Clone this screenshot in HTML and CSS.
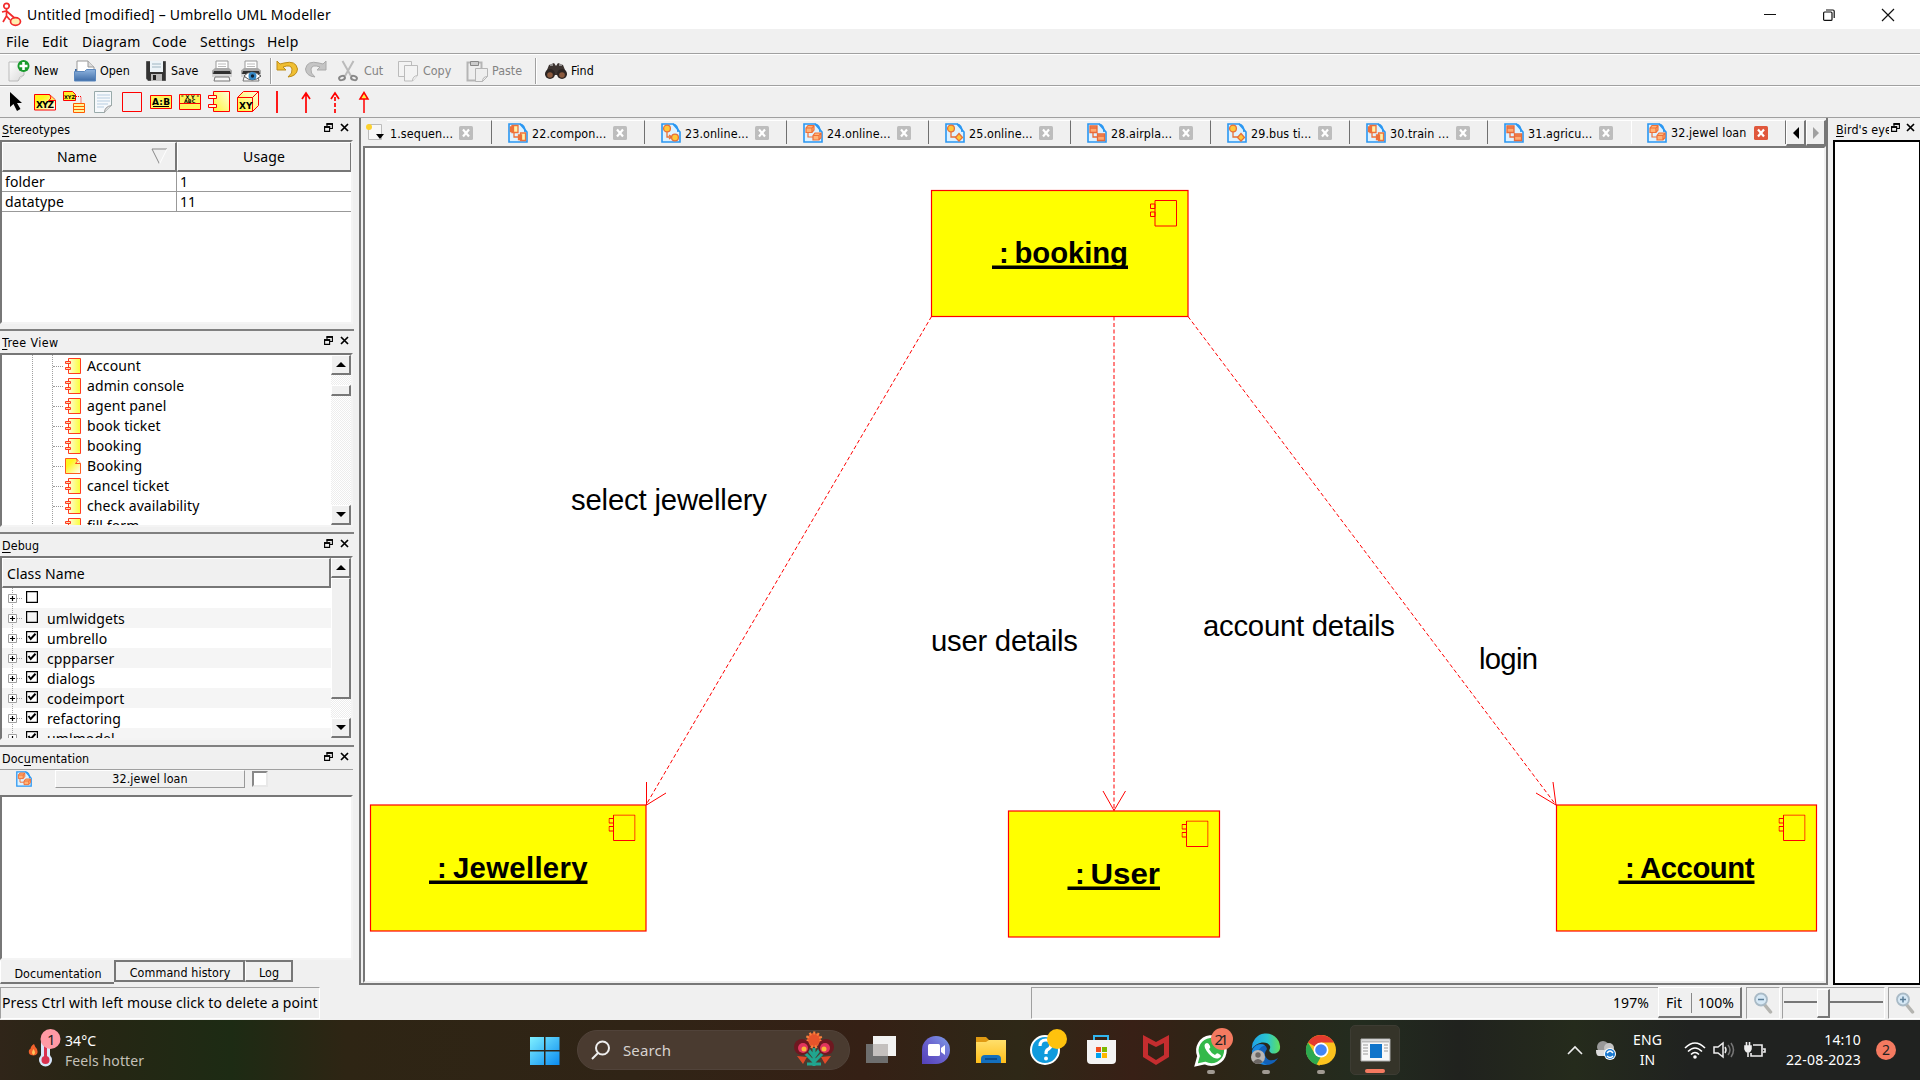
FILE: index.html
```html
<!DOCTYPE html>
<html lang="en">
<head>
<meta charset="utf-8">
<title>Untitled [modified] – Umbrello UML Modeller</title>
<link rel="stylesheet" href="styles.css">
</head>
<body>
<svg class="defs" width="0" height="0">
  <defs>
    <linearGradient id="gy" x1="1" y1="0" x2="0" y2="1"><stop offset="0" stop-color="#fffde0"/><stop offset="1" stop-color="#fff533"/></linearGradient>
    <linearGradient id="gc" x1="0" y1="0" x2="1" y2="0"><stop offset="0" stop-color="#fffbe0"/><stop offset="1" stop-color="#fbff35"/></linearGradient>
    <linearGradient id="gn" x1="0" y1="0" x2="1" y2="1"><stop offset=".3" stop-color="#fff51e"/><stop offset="1" stop-color="#ffffff"/></linearGradient>
    <linearGradient id="gp" x1="0" y1="0" x2="1" y2="1"><stop offset="0" stop-color="#ffffff"/><stop offset="1" stop-color="#d9d9d9"/></linearGradient>
    <linearGradient id="gb" x1="0" y1="0" x2="0" y2="1"><stop offset="0" stop-color="#8fb4df"/><stop offset="1" stop-color="#3f6da8"/></linearGradient>
    <linearGradient id="gw" x1="0" y1="0" x2="1" y2="1"><stop offset="0" stop-color="#7ff0ff"/><stop offset="1" stop-color="#0a8bf0"/></linearGradient>
    <linearGradient id="gf" x1="0" y1="0" x2="0" y2="1"><stop offset="0" stop-color="#ffdf6b"/><stop offset="1" stop-color="#ffbe1a"/></linearGradient>
    <linearGradient id="gch" x1="1" y1="0" x2="0" y2="1"><stop offset="0" stop-color="#7fa0e8"/><stop offset=".5" stop-color="#6a63cf"/><stop offset="1" stop-color="#5340b8"/></linearGradient>
    <linearGradient id="ge" x1="0" y1="0" x2="1" y2="0"><stop offset="0" stop-color="#1fa3e8"/><stop offset=".55" stop-color="#2bc5cf"/><stop offset="1" stop-color="#62e05a"/></linearGradient>
    <symbol id="float" viewBox="0 0 9 9"><path d="M3 3V.8h5.400v4.700H6" fill="none" stroke="#000" stroke-width="1.1"/><path d="M2.500 1h6.400" stroke="#000" stroke-width="1.8"/><path d="M.6 4v4.400h5V4z" fill="#f0f0f0" stroke="#000" stroke-width="1.1"/><path d="M0 4h6.200" stroke="#000" stroke-width="1.8"/></symbol>
    <symbol id="x" viewBox="0 0 9 9"><path d="M1 1l7 7M8 1L1 8" stroke="#000" stroke-width="1.7"/></symbol>
    <symbol id="comp" viewBox="0 0 16 16"><path d="M3.500.5h12v15h-12z" fill="url(#gc)" stroke="#ff3b1f"/><path d="M.5 3.500h5v2h-5zM.5 9.500h5v2h-5z" fill="#ffd9b0" stroke="#ff3b1f"/></symbol>
    <symbol id="art" viewBox="0 0 16 16"><path d="M.5.500h11l4 5v10H.5z" fill="url(#gn)" stroke="#ff5a1f"/><path d="M11.500.5q2 3-1 5h5" fill="#fff5b0" stroke="#ff4b1f"/></symbol>
    <symbol id="page" viewBox="0 0 20 20"><path d="M1 1h11l7 8v10H1z" fill="#def2ff" stroke="#2a97f2" stroke-width="1.6"/><path d="M12 1q5 1 5 8" fill="none" stroke="#2a97f2" stroke-width="1.6"/></symbol>
    <symbol id="pa" viewBox="0 0 20 20"><use href="#page"/><g fill="#fff0a8" stroke="#ef7038" stroke-width="1.300"><path d="M6 10v4h5" fill="none"/><path d="M4 2.500h6v7H4zM12.500 10h5v7.500h-5zM2.500 4h3v1.500h-3zM2.500 7h3v1.500h-3zM10.500 12h3v1.500h-3zM10.500 15h3v1.500h-3z"/></g></symbol>
    <symbol id="pb" viewBox="0 0 20 20"><use href="#page"/><g fill="#ffc83a" stroke="#e87038" stroke-width="1.300"><path d="M6 9v5h4M8 12l3 2-3 2" fill="none"/><circle cx="6" cy="5.500" r="3.400"/><circle cx="14" cy="14.500" r="3.400"/></g></symbol>
    <symbol id="pc" viewBox="0 0 20 20"><use href="#page"/><g fill="#ffb477" stroke="#ef7038" stroke-width="1.200"><path d="M5 10v4h5" fill="none"/><path d="M3 5l2-2.500h6V7L9 9.500H3zM3 5h6v4.500M9 5l2-2.500M10 12.500l2-2.500h6v4.500l-2 2.500h-6zM10 12.500h6v4.500M16 12.500l2-2.500"/></g></symbol>
    <symbol id="pd" viewBox="0 0 20 20"><use href="#page"/><g fill="#ffc83a" stroke="#e87038" stroke-width="1.300"><path d="M6 9v5h5" fill="none"/><circle cx="6" cy="5.500" r="3.400"/><path d="M14 10.500l3.500 4-3.500 3.500-3.500-3.500z"/></g></symbol>
    <symbol id="pe" viewBox="0 0 20 20"><use href="#page"/><g fill="#ffaa70" stroke="#e86a38" stroke-width="1.300"><path d="M6 10v4h4" fill="none"/><path d="M3 3h7v6.500H3zM10.500 11h7v6.500h-7zM3 5h7M10.500 13h7"/></g></symbol>
    <symbol id="closetab" viewBox="0 0 14 14"><rect width="14" height="14" rx="1.500" fill="currentColor"/><path d="M4 3.500l6 7M10 3.500l-6 7" stroke="#fff" stroke-width="2.200"/></symbol>
    <symbol id="printer" viewBox="0 0 22 22"><path d="M5 1h12v10H5z" fill="#fff" stroke="#999"/><path d="M7 4h8M7 6.500h8" stroke="#bbb"/><path d="M1 10.500l3-2.500h14l3 2.500v6H1z" fill="#a9a9a9"/><path d="M3 11h16l1 3H2z" fill="#303030"/><path d="M1 14h20v3H1z" fill="#d5d5d5"/><path d="M4 17h14l1 4H3z" fill="#f6f6f6" stroke="#777"/></symbol>
    <symbol id="mag" viewBox="0 0 20 22"><path d="M11 12l6.500 8" stroke="#b4b4b0" stroke-width="3.500" stroke-linecap="round"/><circle cx="8" cy="7.500" r="6" fill="#d6e8f5" stroke="#a9bac6" stroke-width="1.800"/></symbol>
    <symbol id="tick" viewBox="0 0 12 12"><path d="M.6.6h10.800v10.800H.6z" fill="#fff" stroke="#000" stroke-width="1.200"/><path d="M2.500 5l2.200 3L9.500 2.800" fill="none" stroke="#000" stroke-width="2"/></symbol>
    <symbol id="untick" viewBox="0 0 12 12"><path d="M.6.6h10.800v10.800H.6z" fill="none" stroke="#000" stroke-width="1.200"/></symbol>
    <symbol id="plus" viewBox="0 0 14 20"><path d="M4.500 0v20M9 10.500h5" stroke="#a0a0a0" stroke-dasharray="1 1"/><path d="M.5 6.500h8v8h-8z" fill="#fff" stroke="#a0a0a0"/><path d="M2 10.500h5M4.500 8v5" stroke="#000" stroke-width="1.200"/></symbol>
    <symbol id="classicon" viewBox="0 0 27 27"><path d="M5 .5h21.500v25.500H5zM.5 4h4.500v4.500H.5zM.5 12h4.500v4.500H.5z" fill="#ff0" stroke="#f00"/></symbol>
  </defs>
</svg>

<header class="titlebar">
  <svg class="app-icon" width="20" height="25" viewBox="0 0 20 25"><g fill="none" stroke="#f22b2b" stroke-width="1.700"><circle cx="5.500" cy="4" r="2.700"/><path d="M5.500 7v7L2 20M5.500 14l3.500 4M1 10l4.500-1 8 7"/><ellipse cx="14.500" cy="19.500" rx="5" ry="3.800" fill="#ffefb0"/></g></svg>
  <span class="title">Untitled [modified] – Umbrello UML Modeller</span>
  <div class="win-buttons">
    <svg width="12" height="12"><path d="M0 5.500h12" stroke="#111"/></svg>
    <svg width="12" height="12" fill="none" stroke="#111" stroke-width="1.200"><rect x=".6" y="3" width="8.400" height="8.400" rx="1"/><path d="M3 1h7q1.200 0 1.200 1.200V9"/></svg>
    <svg width="12" height="12" stroke="#111" stroke-width="1.200"><path d="M0 0l12 12M12 0L0 12"/></svg>
  </div>
</header>

<nav class="menubar"><span class="m-file">File</span><span class="m-edit">Edit</span><span class="m-diagram">Diagram</span><span class="m-code">Code</span><span class="m-settings">Settings</span><span class="m-help">Help</span></nav>

<div class="toolbar main-tools">
  <button class="t-new"><svg width="22" height="22"><path d="M1 2h15v13l-6 6H1z" fill="url(#gp)" stroke="#bbb"/><path d="M10 21q1-5 6-6" fill="#fff" stroke="#bbb"/><circle cx="15.500" cy="6" r="6" fill="#189a2c"/><path d="M11.500 6h8M15.500 2v8" stroke="#fff" stroke-width="2.600"/></svg>New</button>
  <button class="t-open"><svg width="22" height="22"><path d="M1 9h20v12H1z" fill="#3466a5"/><path d="M3 1h11l6 6v8H3z" fill="#fff" stroke="#999"/><path d="M14 1v6h6" fill="#ddd" stroke="#999"/><path d="M.5 11.500h10l2-2h9v11.500H.5z" fill="url(#gb)" stroke="#5b87bd"/></svg>Open</button>
  <button class="t-save"><svg width="20" height="22"><path d="M.5 1.500h19v19H2l-1.500-2z" fill="#333" stroke="#555"/><path d="M4 1h13v11H4z" fill="#edf4f8"/><path d="M6 4h9M6 7h9" stroke="#9db4c0"/><path d="M5 14h11v7H5z" fill="#bbb"/><path d="M7 15h3v5H7z" fill="#222"/></svg>Save</button>
  <button class="t-print"><svg width="22" height="22"><use href="#printer"/></svg></button>
  <button class="t-preview"><svg width="22" height="22"><use href="#printer"/><path d="M4 16q7-8 17 0-9 8-17 0z" fill="#fff" stroke="#555"/><circle cx="12.500" cy="16" r="4" fill="#3388c6"/><circle cx="12.500" cy="16" r="1.700" fill="#123"/></svg></button>
  <i class="sep"></i>
  <button class="t-undo"><svg width="22" height="18" viewBox="0 0 22 18"><path d="M1 1v9h9L7 7q8-3 9 2 1 4-4 8 9-1 9.500-8Q20 0 8 3L4 4z" fill="#f0bf32" stroke="#bd8c18"/></svg></button>
  <button class="t-redo"><svg width="22" height="18" viewBox="0 0 22 18"><path d="M21 1v9h-9l3-3Q7 4 6 9q-1 4 4 8Q1 16 .5 9 2 0 14 3l4 1z" fill="#c5c5c5" stroke="#aaa"/></svg></button>
  <button class="t-cut off"><svg width="20" height="22" fill="none" stroke-width="2"><path d="M4.500 1l8.500 15M15.500 1L7 16" stroke="#bbb"/><ellipse cx="4" cy="18" rx="3" ry="2" stroke="#888" transform="rotate(-20 4 18)"/><ellipse cx="16" cy="18" rx="3" ry="2" stroke="#888" transform="rotate(20 16 18)"/></svg>Cut</button>
  <button class="t-copy off"><svg width="20" height="22" fill="#f3f3f3" stroke="#bbb"><path d="M.5 1.500h13v15H.5z"/><path d="M6.500 5.500h13v10l-5 5.500h-8z"/><path d="M14.500 21q0-5 5-5.500"/></svg>Copy</button>
  <button class="t-paste off"><svg width="22" height="22" fill="#eee" stroke="#b5b5b5"><path d="M1.500 2.500h14v18h-14z" stroke-width="2"/><path d="M4.500 1.500h8v4h-8z" fill="#ccc" stroke="#888"/><path d="M9.500 8.500h12v8l-5 5h-7zM16.500 21.500q0-5 5-5"/></svg>Paste</button>
  <i class="sep sep2"></i>
  <button class="t-find"><svg width="22" height="18"><path d="M4 3l5-2 2 3 2-3 5 2 4 10H0z" fill="#3c3330"/><path d="M5 3l3 0M14 3l3 0" stroke="#aaa" stroke-width="1.500"/><circle cx="5" cy="12" r="5" fill="#2d2523"/><circle cx="17" cy="12" r="5" fill="#2d2523"/><circle cx="5" cy="13" r="2.800" fill="#8b5a3e"/><circle cx="17" cy="13" r="2.800" fill="#8b5a3e"/></svg>Find</button>
</div>

<div class="toolbar draw-tools">
  <button><svg width="14" height="20" viewBox="0 0 14 20"><path d="M1 0v15l3.500-3 3.500 7 3.500-2-3.500-6H13z"/></svg></button>
  <button><svg width="22" height="18"><path d="M.5 1.500h15l6 5.500v10H.5z" fill="url(#gn)" stroke="red"/><path d="M15.500 1.500q3 4-1 6h7" fill="#ffe96a" stroke="red"/><text x="2" y="14.500" class="ic10" textLength="18">XYZ</text></svg></button>
  <button><svg width="22" height="22"><path d="M.5.500h9l3 3v6H.5z" fill="#fff02a" stroke="red"/><text x="1" y="8" class="ic6">XYZ</text><path d="M13 5.500h5v6" stroke="red" fill="none" stroke-dasharray="1 1"/><path d="M10.500 12.500h11v9h-11zM10.500 15.500h11M10.500 18.500h11" fill="#fff59a" stroke="#ff5a00"/></svg></button>
  <button><svg width="20" height="22"><path d="M1.500.500h17v14l-7 7h-10z" fill="#f6f9fc" stroke="#9aa"/><path d="M4 4h13M4 7h13M4 10h13M4 13h11M4 16h7" stroke="#b7cde0"/><path d="M11.500 21.500q0-6 7-7" fill="#ddd" stroke="#999"/></svg></button>
  <button><svg width="20" height="20"><path d="M.5.500h19v19H.5z" fill="none" stroke="red"/></svg></button>
  <button><svg width="22" height="14"><path d="M.5.500h21v13H.5z" fill="#fff45a" stroke="red"/><text x="2" y="10" class="ic9" textLength="18">A:B</text><path d="M3 11.500h16" stroke="#000"/></svg></button>
  <button><svg width="22" height="16"><path d="M.5.500h21v15H.5zM.5 9.500h21" fill="#fff45a" stroke="red"/><text x="2" y="5" class="ic6" textLength="18">"XY"</text><text x="5" y="8.500" class="ic6">ABC</text></svg></button>
  <button><svg width="22" height="22"><path d="M5.500.500h16v20h-16z" fill="url(#gy)" stroke="red"/><path d="M.5 4.500h8v3h-8zM.5 13.500h8v3h-8z" fill="#ffffd0" stroke="red"/></svg></button>
  <button><svg width="22" height="22"><path d="M.5 6.500l6-6h15v14l-6 6H.5zM.5 6.500h15v14M15.500 6.500l6-6" fill="url(#gy)" stroke="red"/><text x="2" y="18" class="ic9">XY</text></svg></button>
  <button><svg width="12" height="22"><path d="M6 0v22" stroke="red" stroke-width="1.800"/></svg></button>
  <button><svg width="12" height="22" fill="none" stroke="red" stroke-width="1.700"><path d="M6 22V2M2 8l4-6 4 6"/></svg></button>
  <button><svg width="12" height="22" fill="none" stroke="red" stroke-width="1.700"><path d="M6 22V2" stroke-dasharray="4 2"/><path d="M2 8l4-6 4 6"/></svg></button>
  <button><svg width="12" height="22" fill="#fff14a" stroke="red" stroke-width="1.500"><path d="M6 22V8M2 8l4-6.500L10 8z"/></svg></button>
</div>

<main class="workspace">
  <aside class="docks">
    <section class="dock d-stereo">
      <h2><span><u>S</u>tereotypes</span><svg width="9" height="9"><use href="#float"/></svg><svg width="9" height="9"><use href="#x"/></svg></h2>
      <div class="sunken">
        <div class="grid head"><b class="raised">Name<svg width="17" height="17"><path d="M1 1h15M1 1l7.500 15" stroke="#888" fill="none"/><path d="M16 1L8.500 16" stroke="#fff"/></svg></b><b class="raised">Usage</b></div>
        <div class="grid"><span>folder</span><span>1</span></div>
        <div class="grid"><span>datatype</span><span>11</span></div>
      </div>
    </section>
    <section class="dock d-tree">
      <h2><span class="tv"><u>T</u>ree View</span><svg width="9" height="9"><use href="#float"/></svg><svg width="9" height="9"><use href="#x"/></svg></h2>
      <div class="sunken split">
        <ul class="tree">
          <li><svg width="16" height="16"><use href="#comp"/></svg>Account</li>
          <li><svg width="16" height="16"><use href="#comp"/></svg>admin console</li>
          <li><svg width="16" height="16"><use href="#comp"/></svg>agent panel</li>
          <li><svg width="16" height="16"><use href="#comp"/></svg>book ticket</li>
          <li><svg width="16" height="16"><use href="#comp"/></svg>booking</li>
          <li><svg width="16" height="16"><use href="#art"/></svg>Booking</li>
          <li><svg width="16" height="16"><use href="#comp"/></svg>cancel ticket</li>
          <li><svg width="16" height="16"><use href="#comp"/></svg>check availability</li>
          <li><svg width="16" height="16"><use href="#comp"/></svg>fill form</li>
        </ul>
        <div class="scroll"><i class="raised arrow up"></i><i class="gap"></i><i class="raised thumb"></i><i class="fill"></i><i class="raised arrow down"></i></div>
      </div>
    </section>
    <section class="dock d-debug">
      <h2><span><u>D</u>ebug</span><svg width="9" height="9"><use href="#float"/></svg><svg width="9" height="9"><use href="#x"/></svg></h2>
      <div class="sunken split">
        <div class="debug">
          <div class="raised class-name">Class Name</div>
          <ul>
            <li><svg width="14" height="20"><use href="#plus"/></svg><svg width="12" height="12"><use href="#untick"/></svg></li>
            <li><svg width="14" height="20"><use href="#plus"/></svg><svg width="12" height="12"><use href="#untick"/></svg>umlwidgets</li>
            <li><svg width="14" height="20"><use href="#plus"/></svg><svg width="12" height="12"><use href="#tick"/></svg>umbrello</li>
            <li><svg width="14" height="20"><use href="#plus"/></svg><svg width="12" height="12"><use href="#tick"/></svg>cppparser</li>
            <li><svg width="14" height="20"><use href="#plus"/></svg><svg width="12" height="12"><use href="#tick"/></svg>dialogs</li>
            <li><svg width="14" height="20"><use href="#plus"/></svg><svg width="12" height="12"><use href="#tick"/></svg>codeimport</li>
            <li><svg width="14" height="20"><use href="#plus"/></svg><svg width="12" height="12"><use href="#tick"/></svg>refactoring</li>
            <li><svg width="14" height="20"><use href="#plus"/></svg><svg width="12" height="12"><use href="#tick"/></svg>umlmodel</li>
          </ul>
        </div>
        <div class="scroll"><i class="raised arrow up"></i><i class="raised thumb"></i><i class="fill"></i><i class="raised arrow down"></i></div>
      </div>
    </section>
    <section class="dock d-doc">
      <h2><span>Doc<u>u</u>mentation</span><svg width="9" height="9"><use href="#float"/></svg><svg width="9" height="9"><use href="#x"/></svg></h2>
      <div class="doc-row"><svg width="16" height="16"><use href="#pc"/></svg><span class="doc-name">32.jewel loan</span><i class="doc-check"></i></div>
      <div class="sunken"></div>
      <div class="dock-tabs"><span class="on">Documentation</span><span class="hist">Command history</span><span class="log">Log</span></div>
    </section>
  </aside>

  <section class="editor">
    <div class="tabs">
      <svg class="newtab" width="20" height="20"><path d="M3.500 2.500h13v15h-13z" fill="#f7f7f7" stroke="#bbb"/><circle cx="4" cy="5" r="3" fill="#fcd12e"/><path d="M11 12h8l-4 5z"/></svg>
      <div class="tab t1"><span>1.sequen...</span><svg width="14" height="14"><use href="#closetab"/></svg></div>
      <div class="tab t2"><svg width="20" height="20"><use href="#pa"/></svg><span>22.compon...</span><svg width="14" height="14"><use href="#closetab"/></svg></div>
      <div class="tab t3"><svg width="20" height="20"><use href="#pb"/></svg><span>23.online...</span><svg width="14" height="14"><use href="#closetab"/></svg></div>
      <div class="tab t4"><svg width="20" height="20"><use href="#pc"/></svg><span>24.online...</span><svg width="14" height="14"><use href="#closetab"/></svg></div>
      <div class="tab t5"><svg width="20" height="20"><use href="#pd"/></svg><span>25.online...</span><svg width="14" height="14"><use href="#closetab"/></svg></div>
      <div class="tab t6"><svg width="20" height="20"><use href="#pe"/></svg><span>28.airpla...</span><svg width="14" height="14"><use href="#closetab"/></svg></div>
      <div class="tab t7"><svg width="20" height="20"><use href="#pd"/></svg><span>29.bus ti...</span><svg width="14" height="14"><use href="#closetab"/></svg></div>
      <div class="tab t8"><svg width="20" height="20"><use href="#pa"/></svg><span>30.train ...</span><svg width="14" height="14"><use href="#closetab"/></svg></div>
      <div class="tab t9"><svg width="20" height="20"><use href="#pe"/></svg><span>31.agricu...</span><svg width="14" height="14"><use href="#closetab"/></svg></div>
      <div class="tab t10"><svg width="20" height="20"><use href="#pc"/></svg><span>32.jewel loan</span><svg width="14" height="14"><use href="#closetab"/></svg></div>
      <i class="raised nav"><svg width="8" height="12"><path d="M7 0v12L1 6z"/></svg></i><i class="raised nav"><svg width="8" height="12"><path d="M1 0v12l6-6z" fill="#a0a0a0"/></svg></i>
    </div>
    <div class="canvas">
      <svg width="1460" height="835" viewBox="365 148 1460 835">
        <g fill="#ff0" stroke="#f00" stroke-width="1.200">
          <rect x="931.500" y="190.500" width="256.500" height="126"/>
          <rect x="370.500" y="805" width="275.500" height="126"/>
          <rect x="1008.500" y="811" width="211" height="126"/>
          <rect x="1556.500" y="805" width="260" height="126"/>
        </g>
        <g stroke="#f00" fill="none">
          <path d="M931.500 316.500L646 805M1114 316.500V811M1188 316.500L1556 805" stroke-dasharray="4 2.500"/>
          <path d="M646.500 782V805L666 793M1103 791l11 19.500L1125.500 791M1536 793l20 12-3-23"/>
        </g>
        <use href="#classicon" x="1150" y="200" width="27" height="27"/>
        <use href="#classicon" x="608.500" y="814.500" width="27" height="27"/>
        <use href="#classicon" x="1181.500" y="820.500" width="27" height="27"/>
        <use href="#classicon" x="1778.500" y="814.500" width="27" height="27"/>
        <g class="obj">
          <text x="999" y="262.500">:</text><text x="1014.500" y="262.500" textLength="113.500">booking</text>
          <text x="437" y="877.500">:</text><text x="453" y="877.500" textLength="134.500">Jewellery</text>
          <text x="1075" y="883.500">:</text><text x="1090.500" y="883.500" textLength="69.500" lengthAdjust="spacingAndGlyphs">User</text>
          <text x="1625" y="877.500">:</text><text x="1640" y="877.500" textLength="114.500">Account</text>
        </g>
        <path d="M992 267.300h136M429 882.300h158.500M1067.500 888.300h92.500M1618.500 882.300h136" stroke="#000" stroke-width="3.600"/>
        <g class="lbl">
          <text x="571" y="509.500" textLength="196">select jewellery</text>
          <text x="931" y="650.500" textLength="147">user details</text>
          <text x="1203" y="635.500" textLength="192">account details</text>
          <text x="1479" y="668.500" textLength="59">login</text>
        </g>
      </svg>
    </div>
  </section>

  <section class="bird">
    <h2><span><u>B</u>ird's eye</span><svg width="9" height="9"><use href="#float"/></svg><svg width="9" height="9"><use href="#x"/></svg></h2>
    <div class="bird-view"></div>
  </section>
</main>

<footer class="status">
  <div class="cell msg">Press Ctrl with left mouse click to delete a point</div>
  <div class="cell wide">197%</div>
  <div class="raised fit"><span>Fit</span><span>100%</span></div>
  <div class="cell z1"><svg width="20" height="22"><use href="#mag"/><path d="M5 7.500h6" stroke="#5b7e98" stroke-width="1.500"/></svg></div>
  <div class="cell slider"><i class="groove"></i><i class="raised knob"></i><i class="groove rest"></i></div>
  <div class="cell z2"><svg width="20" height="22"><use href="#mag"/><path d="M5 7.500h6M8 4.500v6" stroke="#5b7e98" stroke-width="1.500"/></svg></div>
</footer>

<div class="taskbar">
  <svg class="weather" width="34" height="40"><path d="M6 14q1 3 3 5 2 6-3.500 6.500Q-.5 25 1 20q2-1 2-3 1-2 3-3z" fill="#f2622c"/><path d="M5.500 19q3 4 0 6-3-2 0-6z" fill="#ffc65c"/><rect x="13" y="5" width="9" height="25" rx="4.500" fill="#d7e7fb"/><circle cx="17.500" cy="30" r="6.500" fill="#d7e7fb"/><path d="M17.500 12v18" stroke="#d9304f" stroke-width="3"/><circle cx="17.500" cy="30" r="4" fill="#d9304f"/><circle cx="22.500" cy="9" r="10" fill="#ff9aa5"/><text x="19" y="14.500" class="badge">1</text></svg>
  <div class="wtext"><span>34°C</span><span class="dim">Feels hotter</span></div>
  <svg class="start" width="30" height="30"><path d="M0 1h14v13H0zM15.500 1h14v13h-14zM0 15.500h14V29H0zM15.500 15.500h14V29h-14z" fill="url(#gw)"/></svg>
  <div class="search"><svg width="20" height="20" fill="none" stroke="#eee" stroke-width="2"><circle cx="11.500" cy="8" r="6.500"/><path d="M7 13l-6 6"/></svg><span>Search</span>
    <svg width="40" height="36"><path d="M20 34V16M20 30l-9-9M20 30l9-9M20 25l-6-8M20 25l6-8M13 32h14" stroke="#20a58f" stroke-width="3"/><circle cx="20" cy="8" r="7" fill="#e8542b"/><circle cx="20" cy="8" r="7" fill="none" stroke="#f5813c" stroke-width="3" stroke-dasharray="2 2"/><circle cx="8" cy="15" r="8" fill="#6e1820"/><circle cx="9" cy="16" r="5" fill="#e0355d"/><circle cx="10" cy="17" r="2.500" fill="#f8b83a"/><circle cx="32" cy="15" r="8" fill="#6e1820"/><circle cx="31" cy="16" r="5" fill="#e0355d"/><circle cx="30" cy="17" r="2.500" fill="#f8b83a"/><path d="M3 24l10 1-4 7zM37 24l-10 1 4 7z" fill="#e04a28"/></svg>
  </div>
  <div class="apps">
    <span><svg width="36" height="36"><rect x="3" y="12" width="22" height="19" fill="#6e6e6e"/><rect x="10" y="4" width="23" height="20" fill="#f2f2f2"/><path d="M10 12h15v12H10z" fill="#c4c0be"/></svg></span>
    <span><svg width="36" height="36"><path d="M4 31V18A14 14 0 1 1 18 32H4z" fill="url(#gch)"/><rect x="10" y="12" width="12" height="12" rx="1.500" fill="#fff"/><path d="M23 16l4-3v10l-4-3z" fill="#fff"/></svg></span>
    <span><svg width="36" height="36"><path d="M3 5h10l3 3v6H3z" fill="#e09a13"/><path d="M3 10h10l3-2h17v23H3z" fill="url(#gf)"/><path d="M8 31v-4q0-4 4-4h12q4 0 4 4v4z" fill="#146fbd"/><path d="M12 27h12" stroke="#0b4c8e" stroke-width="2"/></svg></span>
    <span><svg width="42" height="42"><circle cx="20" cy="21" r="14" fill="#109bdd" stroke="#fff" stroke-width="2"/><path d="M15 17q0-6 6-6 5 0 5 5 0 3-4 5-1 1-1 4" fill="none" stroke="#fff" stroke-width="3.200"/><circle cx="21" cy="29.500" r="2" fill="#fff"/><circle cx="32" cy="10" r="10" fill="#ffc20d"/></svg></span>
    <span><svg width="36" height="36"><path d="M11 9V4h14v5" fill="none" stroke="#31b5ee" stroke-width="2"/><path d="M4 8h29v20q0 4-4 4H8q-4 0-4-4z" fill="#f4f4f4"/><path d="M13 15h5v5h-5z" fill="#f04e1f"/><path d="M19 15h5v5h-5z" fill="#7db900"/><path d="M13 21h5v5h-5z" fill="#00a3ee"/><path d="M19 21h5v5h-5z" fill="#ffb800"/></svg></span>
    <span><svg width="36" height="36"><path d="M5 3l13 7 13-7v22l-13 8-13-8zM10 11v12l8 5 8-5V11l-8 4z" fill="#c52d2f" fill-rule="evenodd"/></svg></span>
    <span class="run"><svg width="42" height="42"><path d="M6 36l2.500-9A14 14 0 1 1 15 34z" fill="#34b94a" stroke="#fff" stroke-width="2.600"/><path d="M15 15q3-3 5 2 1 2-1 3 2 4 6 6 2-3 4-1 4 2 0 4-4 2-10-4-6-7-4-10z" fill="#fff"/><circle cx="32" cy="10" r="11" fill="#f47a60"/><text x="24.500" y="15.500" class="badge" textLength="14">21</text></svg></span>
    <span class="run"><svg width="36" height="36"><path d="M4 17A14 14 0 0 1 32 14c1 8-8 9-10 6-2-2 1-3 0-6-3-6-14-4-18 3z" fill="url(#ge)"/><path d="M4 19q1-6 8-7 6 0 7 5-5 7 2 11 5 1 9-2-5 8-14 7Q4 31 4 19z" fill="#1261b8"/><path d="M4 19q4-9 13-6-9 3-6 12 2 5 8 8Q5 32 4 19z" fill="#1689df"/><circle cx="10" cy="25" r="7" fill="#b8b5b2"/><circle cx="10" cy="23" r="2.700" fill="#6b6663"/><path d="M5 30q5-6 10 0-5 4-10 0z" fill="#6b6663"/></svg></span>
    <span class="run"><svg width="36" height="36"><circle cx="18" cy="18" r="15" fill="#fcc31e"/><path d="M18 18L5 10.500A15 15 0 0 1 31 10.500H18z" fill="#e33b2e"/><path d="M5 10.500L12 22l6 3-3 8A15 15 0 0 1 5 10.500z" fill="#2da94f"/><path d="M15 33l8-14" stroke="#fcc31e" stroke-width="3"/><circle cx="18" cy="18" r="7.500" fill="#fff"/><circle cx="18" cy="18" r="5.800" fill="#4285f4"/></svg></span>
    <span class="run active"><svg width="36" height="36"><path d="M4 7h29v22H4z" fill="#f7f7f7" stroke="#aaa"/><path d="M5 9.500h27" stroke="#bbb" stroke-width="2"/><path d="M13 12h12v14H13z" fill="#0f74ca"/><path d="M6 13h5M6 16h5M6 19h5M6 22h5M27 13h4M27 16h4M27 19h4" stroke="#999"/></svg></span>
  </div>
  <div class="tray">
    <svg class="chev" width="16" height="10" fill="none" stroke="#eee" stroke-width="1.600"><path d="M1 9l7-7 7 7"/></svg>
    <svg class="cloud" width="22" height="22"><circle cx="8" cy="8" r="6" fill="#999"/><circle cx="14" cy="9" r="5" fill="#c4c4c4"/><path d="M1 11h18v6H4q-3 0-3-6z" fill="#ddd"/><circle cx="15" cy="15" r="6" fill="#fff"/><circle cx="15" cy="15" r="5" fill="#1a79d0"/><path d="M12 14q3-4 6 0M18 17q-3 3-6 0" stroke="#fff" stroke-width="1.500" fill="none"/></svg>
    <div class="lang"><span>ENG</span><span>IN</span></div>
    <svg class="wifi" width="22" height="18" fill="none" stroke="#fff" stroke-width="1.600"><path d="M1 7q10-10 20 0M4 10.500q7-7 14 0M7 13.500q4-4 8 0"/><circle cx="11" cy="16" r="1" fill="#fff"/></svg>
    <svg class="vol" width="22" height="18" fill="none" stroke="#eee" stroke-width="1.500"><path d="M1 6h4l5-4v14l-5-4H1z"/><path d="M12 6q2 3 0 6"/><path d="M15 4q4 5 0 10M18 2q5 7 0 14" stroke="#777"/></svg>
    <svg class="bat" width="22" height="18" fill="none" stroke="#eee" stroke-width="1.600"><path d="M9 4h9v11H7v-3M19 8h2v3h-2"/><path d="M1 5h6v3q-1 3-3 3T1 8zM2.500 5V1M5.500 5V1M4 11v5" fill="#eee"/></svg>
    <div class="clock"><span>14:10</span><span>22-08-2023</span></div>
    <b class="count">2</b>
  </div>
</div>
</body>
</html>
```
FILE: styles.css
```css
* { box-sizing: border-box; }
body { margin: 0; width: 1920px; height: 1080px; overflow: hidden; display: flex; flex-direction: column; background: #f0f0f0; color: #000; font: 14px/20px "Noto Sans", "Open Sans", sans-serif; letter-spacing: .1px; }
svg { flex: none; display: block; overflow: visible; }
.defs { position: absolute; }
i { display: block; flex: none; }
u { text-underline-offset: 2px; }
span { white-space: pre; }

.titlebar { flex: none; height: 29px; background: #fff; display: flex; align-items: center; padding-left: 1px; }
.title { margin-left: 6px; flex: 1; letter-spacing: .19px; }
.win-buttons { display: flex; gap: 47px; padding-right: 26px; }
.menubar { flex: none; height: 25px; border-bottom: 1px solid #a0a0a0; display: flex; align-items: center; padding-left: 6px; padding-top: 1px; letter-spacing: .25px; }
.m-file { width: 36px; } .m-edit { width: 40px; } .m-diagram { width: 70px; } .m-code { width: 48px; } .m-settings { width: 67px; }

.toolbar { flex: none; display: flex; align-items: center; }
.main-tools { height: 32px; border-top: 1px solid #fff; border-bottom: 1px solid #a0a0a0; padding-left: 8px; padding-top: 1px; }
.toolbar button { border: 0; padding: 0; background: none; display: flex; align-items: center; gap: 4px; color: #000; flex: none; white-space: nowrap; }
.main-tools button, h2, .tab, .doc-row, .dock-tabs { font: 12.400px/18px "DejaVu Sans Condensed", "DejaVu Sans", sans-serif; }
.toolbar .off { color: #838383; }
.t-new { width: 66px; } .t-open { width: 72px; } .toolbar .t-save { width: 65px; gap: 5px; }
.t-print { width: 29px; } .t-preview { width: 30px; }
.sep { width: 2px; height: 26px; border-left: 1px solid #a0a0a0; border-right: 1px solid #fff; }
.toolbar .t-undo { width: 29px; margin-left: 4px; margin-bottom: 4px; } .toolbar .t-redo { width: 33px; margin-bottom: 4px; }
.toolbar .t-cut { width: 60px; gap: 6px; } .toolbar .t-copy { width: 68px; gap: 5px; } .t-paste { width: 69px; }
.sep2 { margin-right: 8px; }
.draw-tools { height: 32px; border-top: 1px solid #fff; border-bottom: 1px solid #a0a0a0; padding: 0 0 1px 1px; }
.draw-tools button { width: 29px; height: 24px; justify-content: center; }
.ic10, .ic9 { font: bold 9px "DejaVu Sans", sans-serif; }
.ic6 { font: bold 5px "DejaVu Sans", sans-serif; }

.workspace { flex: none; height: 867px; display: flex; }
.docks { flex: none; width: 354px; display: flex; flex-direction: column; }
.dock { display: flex; flex-direction: column; padding-right: 1px; border-bottom: 2px solid #808080; }
.d-stereo { height: 213px; } .d-tree { height: 203px; } .d-debug { height: 213px; } .d-doc { height: 238px; border: 0; }
h2 { flex: none; height: 22px; margin: 0; display: flex; align-items: center; font-weight: 400; padding: 1px 4px 0 2px; gap: 7px; }
h2 span { flex: 1; overflow: hidden; }
h2 .tv { letter-spacing: .4px; }
h2 svg { margin-bottom: 4px; }
.sunken { flex: 1; min-height: 0; margin-bottom: 5px; background: #fff; border: 2px solid #777; border-right-color: #f4f4f4; border-bottom-color: #f4f4f4; overflow: hidden; }
.raised { background: #f0f0f0; border: 1px solid #fff; border-right: 2px solid #777; border-bottom: 2px solid #777; }
.grid { display: grid; grid-template-columns: 175px 175px; height: 20px; }
.grid.head { height: 30px; }
.grid b { font-weight: 400; display: flex; justify-content: center; align-items: center; position: relative; }
.grid b:first-child { padding-right: 24px; }
.grid b svg { position: absolute; right: 7px; top: 5px; }
.grid span { border-right: 1px solid #999; border-bottom: 1px solid #999; padding-left: 3px; line-height: 19px; }
.split { display: flex; }
.tree { flex: 1; margin: 0; padding: 1px 0 0 30px; list-style: none; overflow: hidden; background: linear-gradient(#a0a0a0 50%, transparent 0) 30px 0/1px 2px repeat-y, linear-gradient(#a0a0a0 50%, transparent 0) 50px 0/1px 2px repeat-y; }
.tree li { height: 20px; display: flex; align-items: center; gap: 6px; padding-left: 33px; }
.tree li::before { content: ""; width: 10px; margin: 0 -4px 0 -12px; border-top: 1px dotted #999; }
.scroll { width: 20px; display: flex; flex-direction: column; flex: none; background: repeating-conic-gradient(#fff 0 25%, #ededed 0 50%) 0 0/2px 2px; }
.arrow { height: 20px; display: flex; align-items: center; justify-content: center; }
.arrow::before { content: ""; border: 5px solid transparent; }
.up::before { border-bottom-color: #000; border-top: 0; } .down::before { border-top-color: #000; border-bottom: 0; }
.fill { flex: 1; } .gap { height: 10px; } .thumb { height: 11px; } .d-debug .thumb { height: 121px; }
.debug { flex: 1; overflow: hidden; }
.class-name { height: 30px; padding-left: 4px; line-height: 30px; }
.debug ul { margin: 0; padding: 0; list-style: none; }
.debug li { height: 20px; padding: 2px 0 0 6px; display: flex; align-items: center; line-height: 20px; }
.debug li:nth-child(even) { background: #f5f5f5; }
.debug li svg:first-child { margin-bottom: 2px; }
.debug li svg + svg { margin: 0 9px 4px 4px; }
.doc-row { height: 26px; flex: none; display: flex; align-items: flex-start; padding-left: 16px; border-top: 1px solid #a0a0a0; }
.doc-row svg { margin-top: 1px; }
.doc-name { margin-left: 23px; width: 190px; height: 18px; border: 1px solid #fff; border-right-color: #999; border-bottom-color: #999; text-align: center; line-height: 16px; }
.doc-check { margin: 1px 0 0 7px; width: 16px; height: 16px; background: #fff; border: 2px solid #888; border-right-color: #e8e8e8; border-bottom-color: #e8e8e8; }
.d-doc .sunken { margin: 0; }
.dock-tabs { flex: none; height: 25px; display: flex; align-items: flex-start; }
.dock-tabs span { border: 1px solid #fff; border-top: 2px solid #777; border-right: 2px solid #777; border-bottom: 2px solid #777; height: 22px; text-align: center; line-height: 21px; padding-left: 1px; }
.dock-tabs .on { width: 114px; height: 24px; border-top-color: #f0f0f0; border-right: 0; line-height: 23px; }
.dock-tabs .hist { width: 131px; border-left: 2px solid #777; } .dock-tabs .log { width: 48px; }

.editor { flex: none; width: 1469px; min-width: 0; margin-left: 5px; border-left: 2px solid #777; border-right: 2px solid #777; border-bottom: 2px solid #777; display: flex; flex-direction: column; }
.tabs { flex: none; height: 28px; display: flex; padding: 2px 0 1px 4px; }
.newtab { margin: 2px 2px 0 0; }
.tab { flex: none; height: 24px; border-top: 1px solid #fff; border-right: 1px solid #707070; display: flex; align-items: center; padding: 3px 17px 0 16px; gap: 4px; color: #000; }
.tab span { flex: 1; overflow: hidden; }
.tab svg { color: #bdbdbd; } .tab svg:first-child { margin-top: -3px; } .tab svg:last-child { margin-top: -2px; }
.t1 { width: 105px; padding-left: 3px; padding-right: 18px; } .t2 { width: 153px; } .t3, .t4, .t5 { width: 142px; } .t6 { width: 140px; } .t7 { width: 139px; } .t8 { width: 138px; } .t9 { width: 144px; } .t10 { width: 154px; padding-left: 15px; }
.tab.t9 { padding-right: 18px; border-right-color: #fff; }
.tab.t10 span { margin-top: -2px; }
.tab.t10 svg:last-child { color: #e0573c; }
.nav { flex: none; width: 20px; height: 26px; display: flex; align-items: center; justify-content: center; padding-left: 1px; }
.canvas { flex: 1; min-height: 0; margin-left: 2px; background: #fff; border-top: 2px solid #777; border-left: 2px solid #777; border-right: 2px solid #f0f0f0; border-bottom: 2px solid #f0f0f0; overflow: hidden; }
.obj { font: bold 29.300px "Liberation Sans", Arial, sans-serif; letter-spacing: 0; }
.lbl { font: 29.300px "Liberation Sans", Arial, sans-serif; letter-spacing: 0; }
.bird { flex: none; width: 87px; margin-left: auto; display: flex; flex-direction: column; }
.bird h2 { padding: 1px 5px 0 3px; gap: 6px; }
.bird h2 span { margin-right: -4px; }
.bird-view { flex: 1; background: #fff; border: 2px solid #000; border-right-width: 1px; }

.status { flex: none; height: 35px; display: flex; padding-top: 2px; }
.cell { height: 32px; border: 1px solid #a0a0a0; border-right-color: #fff; border-bottom-color: #fff; display: flex; align-items: center; }
.msg { width: 320px; padding: 0 0 0 1px; white-space: nowrap; letter-spacing: .1px; }
.wide { margin-left: 711px; width: 627px; justify-content: flex-end; padding-right: 9px; border-right: 0; }
.fit { width: 84px; height: 31px; display: flex; align-items: center; padding-left: 7px; padding-top: 1px; }
.fit span:first-child { width: 26px; border-right: 1px solid #888; margin-right: 6px; }
.z1 { margin-left: 4px; width: 34px; padding-left: 6px; }
.slider { margin-left: 2px; width: 103px; padding-left: 1px; }
.groove { width: 33px; height: 2px; background: #777; margin-bottom: 3px; } .rest { width: 53px; }
.knob { width: 13px; height: 29px; }
.z2 { margin-left: 3px; width: 32px; padding-left: 6px; border-right: 0; }

.taskbar { flex: none; height: 60px; display: flex; align-items: center; color: #fff; background: linear-gradient(90deg, #302519 0, #262614 5%, #1d2b14 12%, #2e2514 18%, #302416 33%, #352015 45%, #2e2817 53%, #382016 59%, #2e2516 63%, #232c1f 71%, #20221e 76%, #252b1c 82%, #202220 88%, #202220 100%); }
.weather { margin: 0 3px 0 28px; }
.wtext { width: 465px; display: flex; flex-direction: column; padding-top: 1px; }
.dim { color: #c4c1b8; }
.start { margin-top: 1px; margin-right: 17px; }
.search { width: 273px; height: 40px; border-radius: 20px; background: #4a3b30; border: 1px solid #51433a; display: flex; align-items: center; padding-left: 13px; color: #d8d3cf; font-size: 15px; }
.search span { width: 171px; margin-left: 12px; }
.apps { margin-left: 3px; display: flex; align-items: center; }
.apps span { width: 55px; height: 50px; display: flex; justify-content: center; align-items: center; position: relative; }
.run::after { content: ""; position: absolute; bottom: 1px; width: 8px; height: 4px; border-radius: 2px; background: #a09a92; }
.apps .active { width: 50px; margin-left: 2px; background: #353429; border: 1px solid #3d3c33; border-radius: 5px; }
.active::after { width: 20px; background: #f47a60; }
.badge { font: 15px "Noto Sans", sans-serif; fill: #222; letter-spacing: 0; }
.tray { margin-left: 167px; display: flex; align-items: center; }
.cloud { margin-left: 12px; }
.lang { margin-left: 8px; width: 45px; display: flex; flex-direction: column; align-items: center; margin-right: 14px; }
.vol { margin-left: 7px; } .bat { margin-left: 9px; }
.clock { width: 95px; display: flex; flex-direction: column; align-items: flex-end; letter-spacing: .2px; }
.count { margin-left: 15px; width: 20px; height: 20px; border-radius: 50%; background: #f47a60; color: #222; font-weight: 400; text-align: center; }
```
